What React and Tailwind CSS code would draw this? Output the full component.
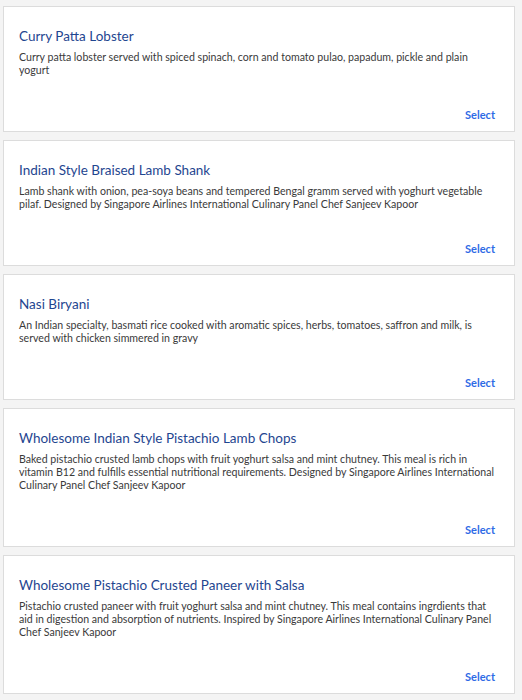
import React from "react";

const items = [
  {
    title: "Curry Patta Lobster",
    desc: "Curry patta lobster served with spiced spinach, corn and tomato pulao, papadum, pickle and plain yogurt",
  },
  {
    title: "Indian Style Braised Lamb Shank",
    desc: "Lamb shank with onion, pea-soya beans and tempered Bengal gramm served with yoghurt vegetable pilaf. Designed by Singapore Airlines International Culinary Panel Chef Sanjeev Kapoor",
  },
  {
    title: "Nasi Biryani",
    desc: "An Indian specialty, basmati rice cooked with aromatic spices, herbs, tomatoes, saffron and milk, is served with chicken simmered in gravy",
  },
  {
    title: "Wholesome Indian Style Pistachio Lamb Chops",
    desc: "Baked pistachio crusted lamb chops with fruit yoghurt salsa and mint chutney. This meal is rich in vitamin B12 and fulfills essential nutritional requirements. Designed by Singapore Airlines International Culinary Panel Chef Sanjeev Kapoor",
  },
  {
    title: "Wholesome Pistachio Crusted Paneer with Salsa",
    desc: "Pistachio crusted paneer with fruit yoghurt salsa and mint chutney. This meal contains ingrdients that aid in digestion and absorption of nutrients. Inspired by Singapore Airlines International Culinary Panel Chef Sanjeev Kapoor",
  },
];

export default function App() {
  return (
    <div
      className="min-h-[700px] w-[522px] bg-[#f4f4f4] pt-[6px] pl-[3px]"
      style={{ fontFamily: "Lato, 'Open Sans', Arial, sans-serif" }}
    >
      <div className="flex w-[512px] flex-col gap-[8px]">
        {items.map((it) => (
          <div
            key={it.title}
            className="flex flex-col border border-[#dcdcdc] bg-white pl-[15px] pr-[14px] pt-[20px] pb-[10px]"
          >
            <div className="text-[13.5px] leading-[18px] text-[#1f4690]">
              {it.title}
            </div>
            <div className="mt-[6px] text-[10.6px] leading-[13px] text-[#3a3a3a]">
              {it.desc}
            </div>
            <div className="mr-[5px] mt-[31px] self-end text-[11px] font-bold leading-[13px] text-[#2e6be6]">
              Select
            </div>
          </div>
        ))}
      </div>
    </div>
  );
}
